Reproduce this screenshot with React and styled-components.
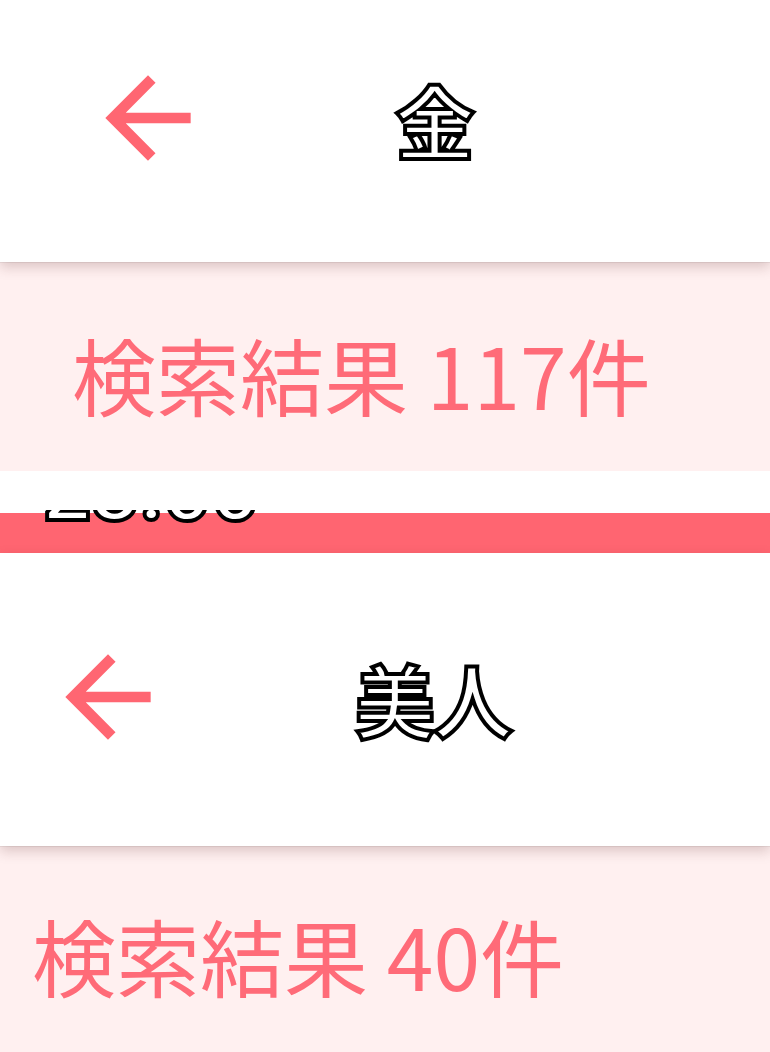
import React from 'react';
import styled, { createGlobalStyle } from 'styled-components';

const GlobalStyle = createGlobalStyle`
  html, body {
    margin: 0;
    padding: 0;
    background: #ffffff;
  }
  body {
    font-family: "Noto Sans CJK JP", "Noto Sans", sans-serif;
    overflow: hidden;
  }
`;

const Page = styled.div`
  width: 770px;
  height: 1052px;
  overflow: hidden;
  display: flex;
  flex-direction: column;
`;

const Screen = styled.section`
  display: flex;
  flex-direction: column;
  flex-shrink: 0;
`;

// status bar of the second screenshot, its top is cropped away
const StatusBar = styled.div`
  height: 43px;
  flex-shrink: 0;
  background: linear-gradient(#ffffff 0 3px, #ff6571 3px);
  overflow: hidden;
  padding-left: ${(p) => p.$inset - 1}px;
`;

const Clock = styled.div`
  margin-top: -60px;
  font-family: Roboto, "Noto Sans", sans-serif;
  font-weight: 700;
  font-size: 84px;
  line-height: 1;
  color: #ffffff;
  -webkit-text-stroke: 4px #000000;
  text-shadow: 0 0 1px #000000;
`;

const Header = styled.header`
  position: relative;
  z-index: 1;
  height: ${(p) => p.$height}px;
  flex-shrink: 0;
  box-sizing: border-box;
  padding-top: ${(p) => p.$top}px;
  padding-left: ${(p) => p.$inset}px;
  display: flex;
  align-items: flex-start;
  background: #ffffff;
  box-shadow: 0 1px 0 rgba(0, 0, 0, 0.06), 0 5px 12px rgba(90, 40, 40, 0.22);
`;

const BackButton = styled.button`
  width: 128px;
  height: 128px;
  padding: 0;
  border: none;
  background: none;
  display: flex;
  align-items: center;
  justify-content: center;
  flex-shrink: 0;
`;

const Title = styled.h1`
  margin: 0 0 0 183px;
  height: 128px;
  display: flex;
  align-items: center;
  font-family: "Noto Sans CJK JP", sans-serif;
  font-weight: 700;
  font-size: 80px;
  line-height: 1;
  color: #ffffff;
  -webkit-text-stroke: 4px #000000;
  text-shadow: 0 0 1px #000000;
  letter-spacing: -2px;
`;

const ResultBar = styled.div`
  height: ${(p) => p.$height}px;
  flex-shrink: 0;
  box-sizing: border-box;
  padding-top: ${(p) => p.$top}px;
  padding-left: ${(p) => p.$inset - 12}px;
  background: #fff0f0;
`;

const ResultText = styled.p`
  margin: 0;
  font-family: "Noto Sans CJK JP", sans-serif;
  font-weight: 400;
  font-size: 84px;
  line-height: 1;
  color: #ff6b78;
  white-space: nowrap;
`;

const ListArea = styled.div`
  height: ${(p) => p.$height}px;
  flex-shrink: 0;
  background: #ffffff;
`;

function BackArrow() {
  return (
    <svg width="128" height="128" viewBox="0 0 24 24" aria-hidden="true">
      <path
        fill="#ff6672"
        d="M20 11H7.83l5.59-5.59L12 4l-8 8 8 8 1.41-1.41L7.83 13H20v-2z"
      />
    </svg>
  );
}

export default function App() {
  return (
    <>
      <GlobalStyle />
      <Page>
        <Screen>
          <Header $height={262} $top={54} $inset={84}>
            <BackButton>
              <BackArrow />
            </BackButton>
            <Title>金</Title>
          </Header>
          <ResultBar $height={209} $top={70} $inset={84}>
            <ResultText>検索結果 117件</ResultText>
          </ResultBar>
          <ListArea $height={39} />
        </Screen>
        <Screen>
          <StatusBar $inset={44}>
            <Clock>23:00</Clock>
          </StatusBar>
          <Header $height={293} $top={80} $inset={44}>
            <BackButton>
              <BackArrow />
            </BackButton>
            <Title>美人</Title>
          </Header>
          <ResultBar $height={240} $top={67} $inset={44}>
            <ResultText>検索結果 40件</ResultText>
          </ResultBar>
        </Screen>
      </Page>
    </>
  );
}
